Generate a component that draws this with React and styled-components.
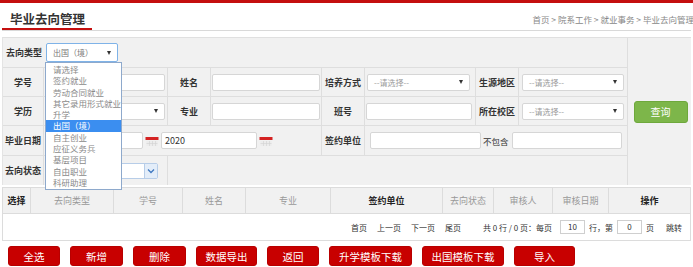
import React from 'react';
import styled, { createGlobalStyle } from 'styled-components';

const Global = createGlobalStyle`
  html, body { margin: 0; padding: 0; background: #fff; }
  body { font-family: "Noto Sans CJK SC", "Microsoft YaHei", sans-serif; color: #333; }
  * { box-sizing: border-box; }
`;

const Page = styled.div`
  position: relative;
  width: 693px;
  height: 267px;
  overflow: hidden;
  padding: 0 2px;
`;

const TopLine = styled.div`
  height: 3px;
  margin: 0 -2px;
  background: #c40f0f;
`;

const Header = styled.div`
  display: flex;
  justify-content: space-between;
  height: 28px;
  border-bottom: 1px solid #d9d9d9;
`;

const Title = styled.div`
  width: 90px;
  padding: 9px 0 0 8px;
  font-size: 12.5px;
  line-height: 14px;
  font-weight: bold;
  color: #333;
  border-bottom: 2px solid #c40f0f;
  white-space: nowrap;
`;

const Crumb = styled.div`
  padding-top: 11px;
  font-size: 8.5px;
  line-height: 11px;
  color: #888;
  white-space: nowrap;
  margin-right: -3px;
`;

const Panel = styled.div`
  display: flex;
  margin-top: 6px;
  height: 148px;
  background: #f1f1f1;
  border-top: 1px solid #e0e0e0;
  border-left: 1px solid #e4e4e4;
`;

const FormGrid = styled.div`
  display: grid;
  grid-template-columns: 40px 123px 42px 110px 42px 110px 42px 108px;
  grid-template-rows: 29px 28px 28px 29px 29px;
  gap: 1px;
  background: #dedede;
`;

const Cell = styled.div`
  grid-column: span ${(p) => p.$span || 1};
  background: #f1f1f1;
  display: flex;
  align-items: center;
  justify-content: ${(p) => (p.$center ? 'center' : 'flex-start')};
  padding: ${(p) => p.$pad || '0 2px'};
  gap: ${(p) => p.$gap || '0'};
`;

const Label = styled.span`
  font-size: 9px;
  font-weight: bold;
  color: #333;
  white-space: nowrap;
`;

const SideCol = styled.div`
  flex: 1;
  border-left: 1px solid #dedede;
  display: flex;
  align-items: center;
  justify-content: center;
  padding-left: 2px;
`;

const Input = styled.div`
  width: ${(p) => p.$w || '100%'};
  height: 17px;
  flex: none;
  background: #fff;
  border: 1px solid #d6d6d6;
  border-radius: 2px;
  font-size: 9px;
  line-height: 15px;
  padding-left: 3px;
  color: #333;
`;

const Select = styled.div`
  width: ${(p) => p.$w || '100%'};
  height: ${(p) => p.$h || '17px'};
  flex: none;
  background: #fff;
  border: 1px solid ${(p) => (p.$focus ? '#7fb3e8' : '#d6d6d6')};
  border-radius: 2px;
  display: flex;
  align-items: center;
  justify-content: space-between;
  padding: 0 6px 0 6px;
  font-size: 8px;
  color: ${(p) => (p.$dim ? '#9a9a9a' : '#777')};
  white-space: nowrap;
`;

const Arrow = styled.span`
  width: 0;
  height: 0;
  border-left: 2.5px solid transparent;
  border-right: 2.5px solid transparent;
  border-top: 4px solid #333;
`;

const IeSelect = styled.div`
  width: 113px;
  height: 16px;
  margin-left: 1px;
  background: #fff;
  border: 1px solid #b7cde8;
  border-radius: 2px;
  display: flex;
  justify-content: flex-end;
`;

const IeArrowBox = styled.div`
  width: 13px;
  height: 100%;
  background: #e3edf9;
  border-left: 1px solid #b7cde8;
  display: flex;
  align-items: center;
  justify-content: center;
`;

const QueryButton = styled.button`
  width: 54px;
  height: 22px;
  border: 1px solid #6ea83c;
  border-radius: 3px;
  background: #7db64a;
  color: #fff;
  font-family: inherit;
  font-size: 10px;
  padding: 0;
`;

const SmallText = styled.span`
  font-size: 8.5px;
  color: #333;
  white-space: nowrap;
`;

const Table = styled.table`
  margin-top: 2px;
  width: 688px;
  border-collapse: collapse;
  table-layout: fixed;
`;

const Th = styled.th`
  height: 26px;
  background: #f1f1f1;
  border: 1px solid #dcdcdc;
  font-size: 9px;
  font-weight: ${(p) => (p.$strong ? 'bold' : 'normal')};
  color: ${(p) => (p.$strong ? '#222' : '#999')};
  padding: 0;
  white-space: nowrap;
`;

const PagerCell = styled.td`
  height: 27px;
  border: 1px solid #dcdcdc;
  background: #fff;
  padding: 0 8px 0 0;
`;

const Pager = styled.div`
  display: flex;
  justify-content: flex-end;
  align-items: center;
  font-size: 8px;
  color: #333;
  white-space: nowrap;
`;

const PagerLink = styled.span`
  margin-right: ${(p) => p.$mr || '10px'};
`;

const PagerBox = styled.span`
  display: inline-block;
  width: 25px;
  height: 14px;
  border: 1px solid #cfcfcf;
  text-align: center;
  line-height: 12px;
  font-size: 8px;
  margin: 0 ${(p) => p.$mr || '4px'} 0 ${(p) => p.$ml || '4px'};
`;

const ButtonRow = styled.div`
  display: flex;
  gap: 10px;
  margin-top: 5px;
  padding-left: 6px;
`;

const RedButton = styled.button`
  width: ${(p) => p.$w}px;
  height: 20px;
  padding: 0;
  border: 1px solid #b80000;
  border-radius: 3px;
  background: #c80000;
  color: #fff;
  font-family: inherit;
  font-size: 10.5px;
  white-space: nowrap;
`;

const DropList = styled.div`
  position: absolute;
  left: 45px;
  top: 62px;
  width: 77px;
  padding: 1px 0;
  background: #fff;
  border: 1px solid #8ea9cc;
  z-index: 5;
`;

const DropItem = styled.div`
  height: 11.3px;
  line-height: 11.3px;
  padding-left: 7px;
  font-size: 8.5px;
  white-space: nowrap;
  color: ${(p) => (p.$active ? '#fff' : '#8a8a8a')};
  background: ${(p) => (p.$active ? '#3b8ef0' : 'transparent')};
`;

const CalendarIcon = () => (
  <svg width="14" height="12" viewBox="0 0 14 12" style={{ flex: 'none', margin: '0 2px' }}>
    <rect x="0.5" y="2" width="13" height="3" fill="#d42222" />
    <rect x="1.5" y="6" width="11" height="5" fill="#ececec" />
    <path d="M1.5 8.5h11M4.5 6v5M7.5 6v5M10.5 6v5" stroke="#d2d2d2" strokeWidth="0.6" />
  </svg>
);

const Chevron = () => (
  <svg width="8" height="6" viewBox="0 0 8 6">
    <path d="M1 1.5 L4 4.5 L7 1.5" fill="none" stroke="#3f78c0" strokeWidth="1.3" />
  </svg>
);

const options = ['请选择', '签约就业', '劳动合同就业', '其它录用形式就业', '升学', '出国（境）', '自主创业', '应征义务兵', '基层项目', '自由职业', '科研助理'];

const columns = [
  { w: 28, t: '选择', s: true },
  { w: 83, t: '去向类型' },
  { w: 69, t: '学号' },
  { w: 63, t: '姓名' },
  { w: 85, t: '专业' },
  { w: 112, t: '签约单位', s: true },
  { w: 51, t: '去向状态' },
  { w: 59, t: '审核人' },
  { w: 56, t: '审核日期' },
  { w: 82, t: '操作', s: true },
];

const buttons = [
  ['全选', 52], ['新增', 53], ['删除', 53], ['数据导出', 61], ['返回', 52],
  ['升学模板下载', 83], ['出国模板下载', 82], ['导入', 61],
];

const Placeholder = ({ w }) => (
  <Select $w={w} $dim>
    <span>--请选择--</span>
    <Arrow />
  </Select>
);

export default function App() {
  return (
    <Page>
      <Global />
      <TopLine />
      <Header>
        <Title>毕业去向管理</Title>
        <Crumb>首页 &gt; 院系工作 &gt; 就业事务 &gt; 毕业去向管理</Crumb>
      </Header>

      <Panel>
        <FormGrid>
          <Cell $span={8} $pad="0 0 0 3px" $gap="4px">
            <Label>去向类型</Label>
            <Select $w="72px" $h="19px" $focus>
              <span>出国（境）</span>
              <Arrow />
            </Select>
          </Cell>

          <Cell $center><Label>学号</Label></Cell>
          <Cell $pad="0 2px 0 1px"><Input /></Cell>
          <Cell $center><Label>姓名</Label></Cell>
          <Cell $pad="0 1px 0 1px"><Input /></Cell>
          <Cell $center><Label>培养方式</Label></Cell>
          <Cell $pad="0 5px 0 2px"><Placeholder /></Cell>
          <Cell $center><Label>生源地区</Label></Cell>
          <Cell $pad="0 3px 0 3px"><Placeholder /></Cell>

          <Cell $center><Label>学历</Label></Cell>
          <Cell $pad="0 2px 0 1px">
            <Select><span /><Arrow /></Select>
          </Cell>
          <Cell $center><Label>专业</Label></Cell>
          <Cell $pad="0 1px 0 1px"><Input /></Cell>
          <Cell $center><Label>班号</Label></Cell>
          <Cell $pad="0 3px 0 1px"><Input /></Cell>
          <Cell $center><Label>所在校区</Label></Cell>
          <Cell $pad="0 3px 0 3px"><Placeholder /></Cell>

          <Cell $center><Label>毕业日期</Label></Cell>
          <Cell $span={3} $pad="0 0 0 1px">
            <Input $w="98px" />
            <CalendarIcon />
            <Input $w="96px">2020</Input>
            <CalendarIcon />
          </Cell>
          <Cell $center><Label>签约单位</Label></Cell>
          <Cell $span={3} $pad="0 0 0 5px">
            <Input $w="111px" />
            <SmallText style={{ margin: '0 3px 0 2px' }}>不包含</SmallText>
            <Input $w="110px" />
          </Cell>

          <Cell $center><Label>去向状态</Label></Cell>
          <Cell $pad="0 2px 0 0">
            <IeSelect>
              <IeArrowBox><Chevron /></IeArrowBox>
            </IeSelect>
          </Cell>
          <Cell $span={6} />
        </FormGrid>
        <SideCol>
          <QueryButton>查询</QueryButton>
        </SideCol>
      </Panel>

      <Table>
        <colgroup>
          {columns.map((c) => (
            <col key={c.t} style={{ width: c.w }} />
          ))}
        </colgroup>
        <thead>
          <tr>
            {columns.map((c) => (
              <Th key={c.t} $strong={c.s}>{c.t}</Th>
            ))}
          </tr>
        </thead>
        <tbody>
          <tr>
            <PagerCell colSpan={10}>
              <Pager>
                <PagerLink>首页</PagerLink>
                <PagerLink>上一页</PagerLink>
                <PagerLink>下一页</PagerLink>
                <PagerLink $mr="22px">尾页</PagerLink>
                <span>共 0 行 / 0 页：每页</span>
                <PagerBox $ml="8px">10</PagerBox>
                <span>行，第</span>
                <PagerBox>0</PagerBox>
                <span style={{ marginRight: '12px' }}>页</span>
                <span>跳转</span>
              </Pager>
            </PagerCell>
          </tr>
        </tbody>
      </Table>

      <ButtonRow>
        {buttons.map(([t, w]) => (
          <RedButton key={t} $w={w}>{t}</RedButton>
        ))}
      </ButtonRow>

      <DropList>
        {options.map((o) => (
          <DropItem key={o} $active={o === '出国（境）'}>{o}</DropItem>
        ))}
      </DropList>
    </Page>
  );
}
